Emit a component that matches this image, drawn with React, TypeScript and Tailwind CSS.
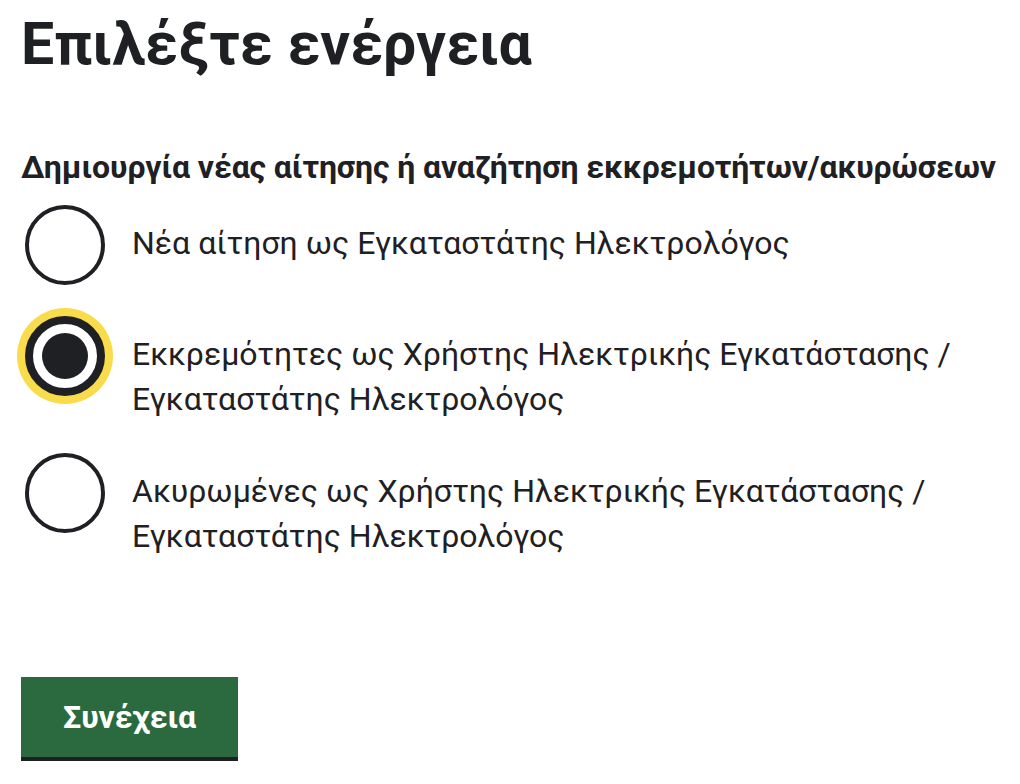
import { useState } from "react";

type Option = {
  id: string;
  label: string;
};

const OPTIONS: Option[] = [
  { id: "new", label: "Νέα αίτηση ως Εγκαταστάτης Ηλεκτρολόγος" },
  {
    id: "pending",
    label:
      "Εκκρεμότητες ως Χρήστης Ηλεκτρικής Εγκατάστασης / Εγκαταστάτης Ηλεκτρολόγος",
  },
  {
    id: "cancelled",
    label:
      "Ακυρωμένες ως Χρήστης Ηλεκτρικής Εγκατάστασης / Εγκαταστάτης Ηλεκτρολόγος",
  },
];

const RadioItem = ({
  option,
  checked,
  onSelect,
}: {
  option: Option;
  checked: boolean;
  onSelect: () => void;
}) => {
  return (
    <label className="flex items-start gap-[27px] cursor-pointer">
      <span
        className={
          checked
            ? "ml-[4px] flex shrink-0 items-center justify-center w-[80px] h-[80px] rounded-full border-[8px] border-[#1f2023] bg-white shadow-[0_0_0_8px_#f9dc4b]"
            : "ml-[4px] flex shrink-0 items-center justify-center w-[80px] h-[80px] rounded-full border-[4px] border-[#1f2023] bg-white"
        }
      >
        {checked && (
          <span className="block w-[46px] h-[46px] rounded-full bg-[#1f2023]" />
        )}
      </span>
      <input
        type="radio"
        name="action"
        className="sr-only"
        checked={checked}
        onChange={onSelect}
      />
      <span className="pt-[16px] text-[32px] leading-[45px] text-[#1f2023] max-w-[830px]">
        {option.label}
      </span>
    </label>
  );
};

const App = () => {
  const [selected, setSelected] = useState("pending");

  return (
    <div className="min-h-[784px] bg-white px-[21px] font-['Roboto',sans-serif] text-[#1f2023]">
      <h1 className="pt-[4px] text-[59px] leading-[80px] font-bold">
        Επιλέξτε ενέργεια
      </h1>
      <fieldset className="mt-[61px]">
        <legend className="whitespace-nowrap text-[32px] leading-[45px] font-bold tracking-[-0.1px]">
          Δημιουργία νέας αίτησης ή αναζήτηση εκκρεμοτήτων/ακυρώσεων
        </legend>
        <div className="mt-[15px] flex flex-col gap-[31px]">
          {OPTIONS.map((option) => (
            <RadioItem
              key={option.id}
              option={option}
              checked={selected === option.id}
              onSelect={() => setSelected(option.id)}
            />
          ))}
        </div>
      </fieldset>
      <button className="mt-[118px] h-[80px] px-[42px] bg-[#2b6a3e] text-white text-[32px] leading-[80px] font-bold shadow-[0_4px_0_#1f2023]">
        Συνέχεια
      </button>
    </div>
  );
};

export default App;
